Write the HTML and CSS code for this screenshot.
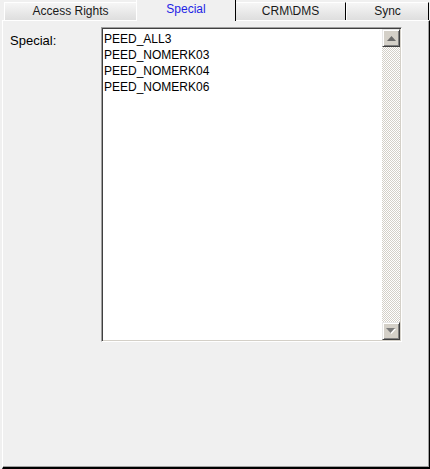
FILE: index.html
```html
<!DOCTYPE html>
<html lang="en">

<head>
    <meta charset="UTF-8">
    <title>Special</title>
    <link rel="stylesheet" href="styles.css">
</head>

<body>

    <div class="window">
        <div class="tabs">
            <div class="tab tab-access">Access Rights</div>
            <div class="tab tab-special active">Special</div>
            <div class="tab tab-crm">CRM\DMS</div>
            <div class="tab tab-sync">Sync</div>
        </div>

        <div class="panel">
            <div class="row">
                <div class="label">Special:</div>
                <div class="listbox">
                    <ul class="items">
                        <li>PEED_ALL3</li>
                        <li>PEED_NOMERK03</li>
                        <li>PEED_NOMERK04</li>
                        <li>PEED_NOMERK06</li>
                    </ul>
                    <div class="scrollbar">
                        <div class="sb-btn">
                            <svg width="9" height="5" viewBox="0 0 9 5"><polygon points="4.5,0 9,5 0,5" fill="#6a6a6a"/></svg>
                        </div>
                        <div class="sb-track"></div>
                        <div class="sb-btn">
                            <svg width="10" height="6" viewBox="0 0 10 6"><polygon points="1,1 10,1 5.5,6" fill="#fff"/><polygon points="0,0 9,0 4.5,5" fill="#7a7a7a"/></svg>
                        </div>
                    </div>
                </div>
            </div>
        </div>
    </div>

</body>

</html>
```

FILE: styles.css
```css
body {
    margin: 0;
    padding: 0;
    background-color: #f0f0f0;
    font-family: "Liberation Sans", Arial, sans-serif;
    font-size: 12px;
    color: #000;
}

.window {
    width: 430px;
    height: 469px;
    background-color: #f0f0f0;
}

/* abas */
.tabs {
    display: flex;
    height: 20px;
    padding-left: 4px;
    position: relative;
    z-index: 1;
}

.tab {
    box-sizing: border-box;
    height: 18px;
    margin-top: 2px;
    line-height: 17px;
    text-align: center;
    color: #1a1a1a;
    background: linear-gradient(#f6f6f6, #dedede);
    border-top: 1px solid #fff;
    border-left: 1px solid #fff;
    border-right: 1px solid #000;
}

.tab-access {
    width: 132px;
    border-right: none;
}

.tab-special {
    width: 100px;
}

.tab-crm {
    width: 110px;
    border-left: none;
}

.tab-sync {
    width: 83px;
}

.tab.active {
    height: 21px;
    margin-top: 0;
    line-height: 19px;
    color: #1f1fe6;
    background: #f0f0f0;
    border-top: none;
}

/* painel */
.panel {
    box-sizing: border-box;
    width: 428px;
    height: 449px;
    margin-left: 2px;
    padding: 6px 0 0 7px;
    border-top: 1px solid #fff;
    border-left: 1px solid #fff;
    border-right: 1px solid #000;
    border-bottom: 2px solid #000;
    box-shadow: inset -1px -1px 0 #a0a0a0;
}

.row {
    display: flex;
}

.label {
    width: 91px;
    padding-top: 6px;
    font-size: 13px;
}

/* lista */
.listbox {
    box-sizing: border-box;
    width: 301px;
    height: 315px;
    display: flex;
    background-color: #fff;
    border-top: 1px solid #a0a0a0;
    border-left: 1px solid #a0a0a0;
    border-right: 1px solid #fff;
    border-bottom: 1px solid #fff;
    box-shadow: inset 1px 1px 0 #404040, inset -1px -1px 0 #d4d0c8;
    padding: 1px;
}

.items {
    flex: 1;
    list-style: none;
    margin: 0;
    padding: 2px 0 0 1px;
    line-height: 16px;
}

.scrollbar {
    width: 18px;
    display: flex;
    flex-direction: column;
}

.sb-btn {
    box-sizing: border-box;
    height: 18px;
    display: flex;
    align-items: center;
    justify-content: center;
    background-color: #d4d0c8;
    border-top: 1px solid #e8e8e8;
    border-left: 1px solid #e8e8e8;
    border-right: 1px solid #404040;
    border-bottom: 1px solid #404040;
    box-shadow: inset 1px 1px 0 #fff, inset -1px -1px 0 #808080;
}

.sb-track {
    flex: 1;
    background: repeating-conic-gradient(#d4d0c8 0 25%, #fff 0 50%) 0 0 / 2px 2px;
}
```
